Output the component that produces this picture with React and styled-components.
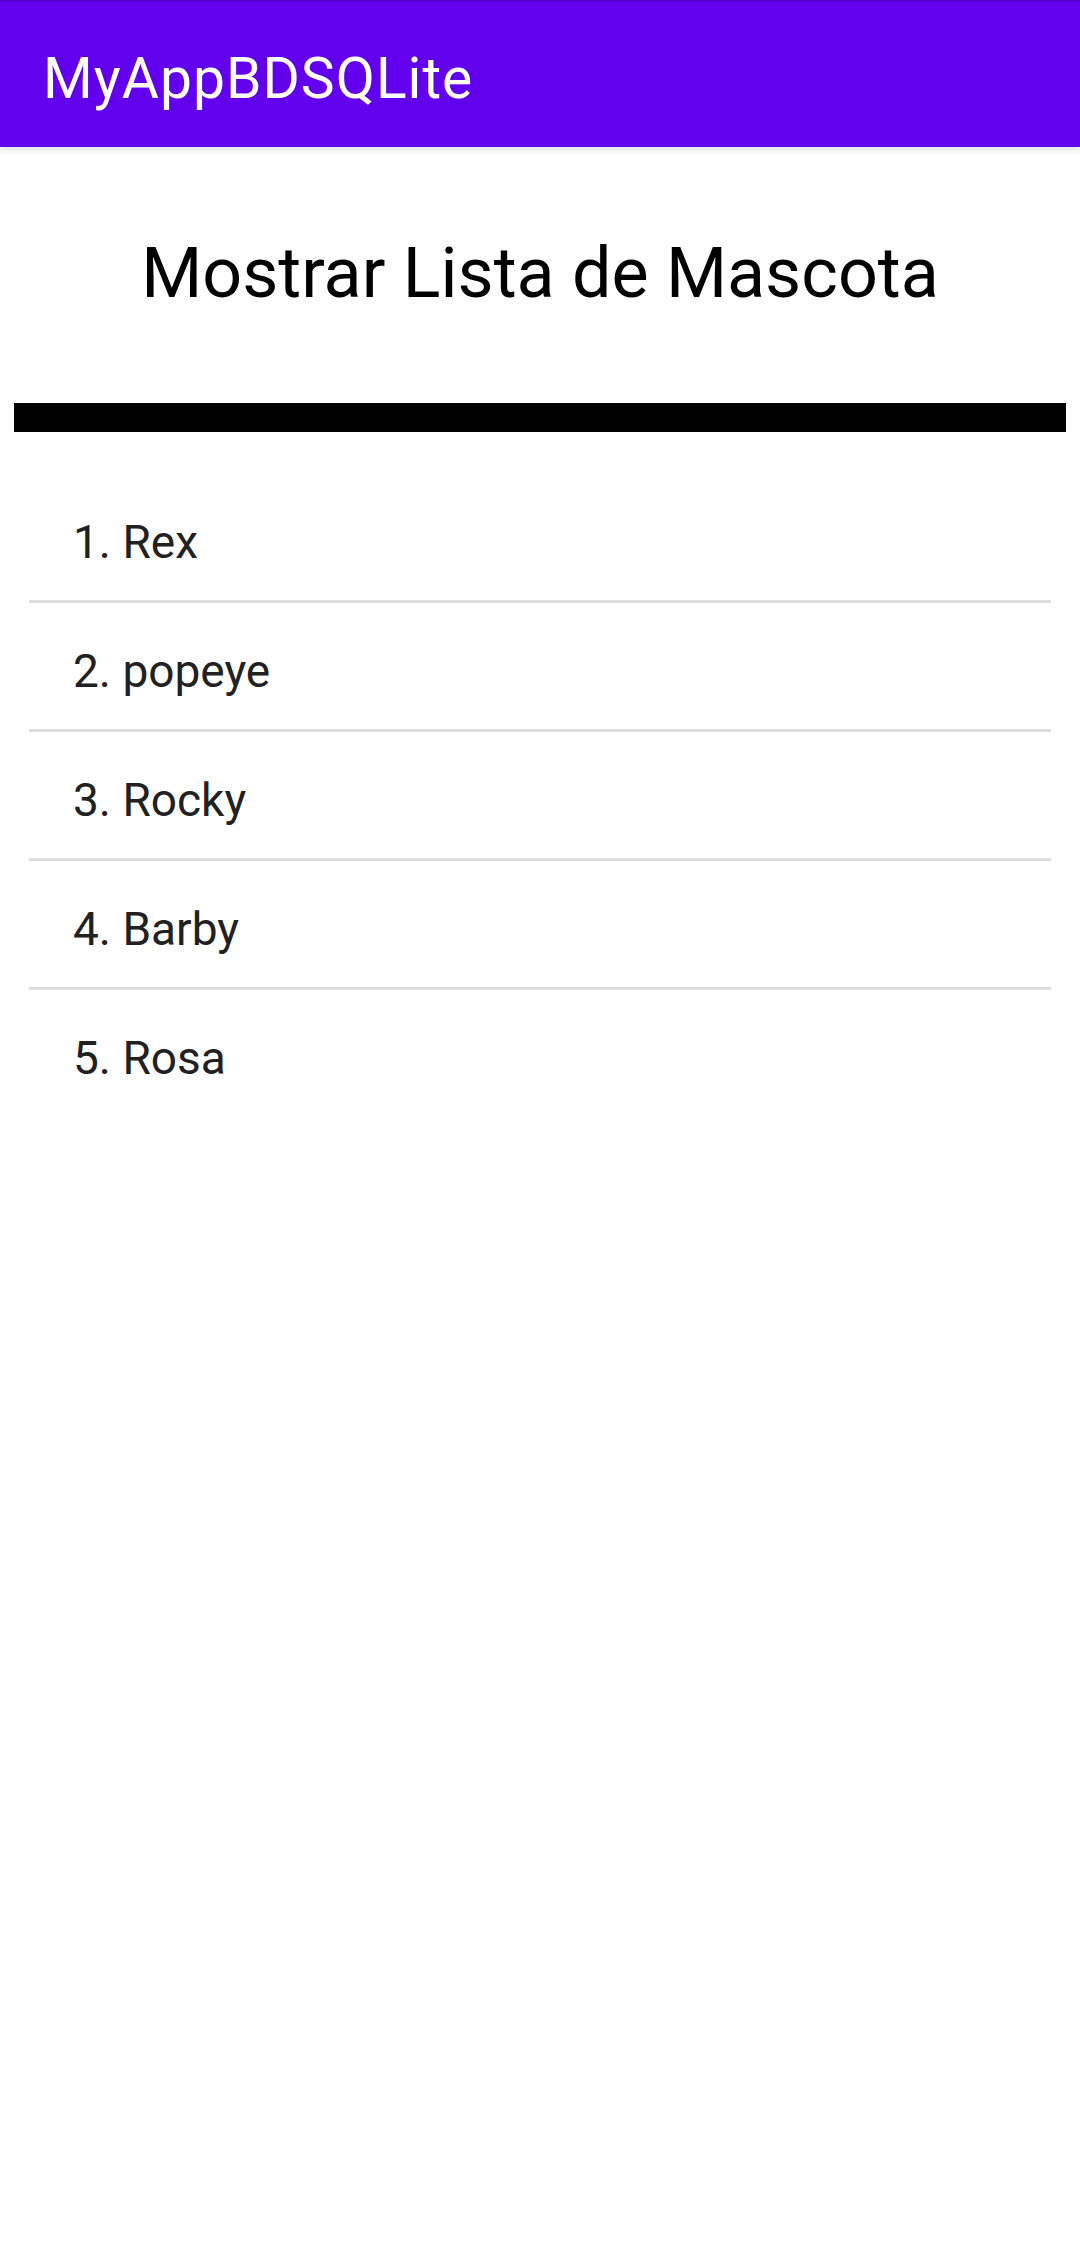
import styled, { createGlobalStyle } from "styled-components";

const GlobalStyle = createGlobalStyle`
  html, body {
    margin: 0;
    padding: 0;
    background: #ffffff;
    font-family: Roboto, "Noto Sans", sans-serif;
  }
`;

const Screen = styled.div({
  width: "1080px",
  minHeight: "2258px",
  background: "#ffffff",
});

const Toolbar = styled.header({
  height: "147px",
  boxSizing: "border-box",
  paddingLeft: "43px",
  paddingTop: "8px",
  display: "flex",
  alignItems: "center",
  background: "#6200ee",
  borderTop: "2px solid #5400d4",
  boxShadow: "0 3px 6px rgba(0, 0, 0, 0.12)",
  position: "relative",
});

const ToolbarTitle = styled.h1({
  margin: 0,
  color: "#ffffff",
  fontSize: "57px",
  lineHeight: "57px",
  letterSpacing: "1px",
  fontWeight: 400,
});

const Content = styled.main({
  padding: "0 14px",
});

const Heading = styled.h2({
  margin: 0,
  padding: "91px 0 95px",
  textAlign: "center",
  fontSize: "70px",
  lineHeight: "70px",
  fontWeight: 400,
  color: "#000000",
});

const Bar = styled.div({
  height: "29px",
  background: "#000000",
});

const PetList = styled.ul({
  listStyle: "none",
  margin: "42px 15px 0",
  padding: 0,
});

const PetRow = styled.li`
  height: 117px;
  display: flex;
  align-items: center;
  padding: 9px 0 0 44px;
  font-size: 46px;
  line-height: 46px;
  color: #212121;
  border-bottom: ${(p) => (p.last ? "none" : "3px solid #dedede")};
`;

const pets = ["Rex", "popeye", "Rocky", "Barby", "Rosa"];

const App = () => {
  return (
    <Screen>
      <GlobalStyle />
      <Toolbar>
        <ToolbarTitle>MyAppBDSQLite</ToolbarTitle>
      </Toolbar>
      <Content>
        <Heading>Mostrar Lista de Mascota</Heading>
        <Bar />
        <PetList>
          {pets.map((name, i) => (
            <PetRow key={name} last={i === pets.length - 1}>
              {i + 1}. {name}
            </PetRow>
          ))}
        </PetList>
      </Content>
    </Screen>
  );
};

export default App;
